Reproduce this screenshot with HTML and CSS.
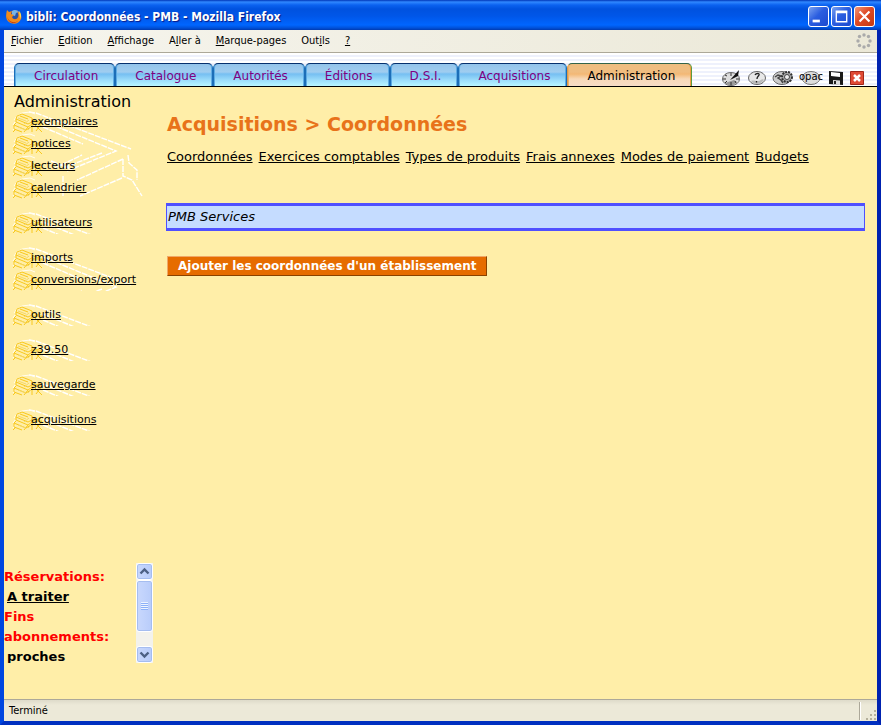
FILE: index.html
```html
<!DOCTYPE html>
<html lang="fr">
<head>
<meta charset="utf-8">
<title>bibli: Coordonnées - PMB</title>
<link rel="stylesheet" href="styles.css">
</head>
<body>
<svg class="defs" aria-hidden="true">
  <symbol id="books" viewBox="0 0 32 22">
    <path d="M4 6l6-4 8-1 5 2M2 9l3-4M1 14l2-3M1 19l2-3" fill="none" stroke="#fffdf2"/>
    <path d="M5 5l5-2 10 4v4l-4 2L4 8zM4 8v3l12 5 4-3v-3M4 12l-2 2 12 5 5-3M2 14v4l8 3M1 21l3-3M20 8l5 3 4-2M21 12h9l-6 8M23 14l7 7M8 5l8 3M16 16l-4 5M20 13v8" fill="none" stroke="#f8c81c"/>
    <path d="M6 7l8 3M12 13l5-4M6 16l8 3M16 19l5-5" fill="none" stroke="#f3d768"/>
  </symbol>
  <symbol id="outline" viewBox="0 0 132 87">
    <path d="M17 1l7 1 95 36M31 10l73 30-49 20M31 16l40 17M90 42L51 57M43 57l27-13M111 48v17l9 4 10 16M116 44l1 8 8 7v10M110 67L68 85M51 65v20M111 48L65 69M39 50l20 8" fill="none" stroke="#fff" stroke-width="1.4" stroke-dasharray="6 1"/>
  </symbol>
</svg>
<header class="titlebar">
  <svg class="fox" viewBox="0 0 16 16" aria-hidden="true">
    <circle cx="8.500" cy="8" r="6" fill="#2853a8"/><path d="M6 3c2-2 6-1 7 1l-3 1-1 3-3-1z" fill="#78b5e8"/>
    <path d="M1 2l2 2 3-1-1 3 3 1-2 2c1 3 5 3 6 0 1-2 0-4-1-6 4 2 5 5 4 8-2 5-8 6-12 3C-1 11 0 6 1 2z" fill="#f38b1b"/>
    <path d="M1 8c1 5 6 8 11 5-4 4-10 2-11-5z" fill="#c63c10"/><path d="M13 3c3 3 2 6 1 8z" fill="#ffdb52"/>
  </svg>
  <span class="caption">bibli: Coordonnées - PMB - Mozilla Firefox</span>
  <button class="win" aria-label="Réduire"><svg viewBox="0 0 21 21"><path d="M4 14h8v3H4z" fill="#fff"/></svg></button>
  <button class="win" aria-label="Agrandir"><svg viewBox="0 0 21 21"><path d="M4 4h13v13H4zM5.500 7v8.500h10V7z" fill="#fff" fill-rule="evenodd"/></svg></button>
  <button class="win close" aria-label="Fermer"><svg viewBox="0 0 21 21"><path d="M5 5l11 11M16 5L5 16" stroke="#fff" stroke-width="2.400"/></svg></button>
</header>
<div class="frame">
  <nav class="menu" aria-label="Menu">
    <a href="#"><u>F</u>ichier</a><a href="#"><u>E</u>dition</a><a href="#"><u>A</u>ffichage</a><a href="#">A<u>l</u>ler à</a><a href="#"><u>M</u>arque-pages</a><a href="#">Out<u>i</u>ls</a><a href="#"><u>?</u></a>
    <svg class="throbber" viewBox="0 0 16 16" aria-hidden="true"><g fill="#aaa"><circle cx="8" cy="2" r="1.700"/><circle cx="12.500" cy="3.500" r="1.700"/><circle cx="14" cy="8" r="1.700"/><circle cx="12.500" cy="12.500" r="1.700"/><circle cx="8" cy="14" r="1.700"/><circle cx="3.500" cy="12.500" r="1.700"/><circle cx="2" cy="8" r="1.700"/><circle cx="3.500" cy="3.500" r="1.700"/></g></svg>
  </nav>
  <div class="tabbar">
    <nav class="tabs" aria-label="Modules">
      <a href="#">Circulation</a><a href="#">Catalogue</a><a href="#">Autorités</a><a href="#">Éditions</a><a href="#">D.S.I.</a><a href="#">Acquisitions</a><a href="#" class="on">Administration</a>
    </nav>
    <div class="tools">
      <button aria-label="Historique"><svg width="20" height="20" viewBox="0 0 20 20"><ellipse cx="9" cy="11" rx="8.500" ry="6.500" fill="#ddd" stroke="#666"/><path d="M3 15c3 3 9 3 12-1l-3-2z" fill="#999"/><path d="M9 5v3M9 14v3M1 11h3M14 11h3M3 7l2 1M3 15l2-2M14 15l-1-2" stroke="#333"/><path d="M8 12l9-10-1 6z" fill="#111"/></svg></button>
      <button aria-label="Aide"><svg width="20" height="20" viewBox="0 0 20 20"><ellipse cx="10" cy="10" rx="8.500" ry="6.500" fill="#e8e8e8" stroke="#666"/><path d="M4 13c3 4 9 4 13-1-2-2-3 1-6 1s-5-1-7 0z" fill="#bbb"/><path d="M8 7c1-2 5-2 4 0-.5 1.500-2 1.500-2 4M9.500 13v1.500" fill="none" stroke="#222" stroke-width="1.300"/></svg></button>
      <button aria-label="Paramètres"><svg width="22" height="20" viewBox="0 0 22 20"><ellipse cx="10" cy="10" rx="9" ry="6.500" fill="#ccc" stroke="#666"/><path d="M3 9l3-2 3 1-3 2 3 2 2 3" fill="none" stroke="#444" stroke-width="1.500"/><circle cx="15" cy="9" r="5" fill="#aaa" stroke="#333" stroke-width="2" stroke-dasharray="2 1"/><circle cx="15" cy="9" r="2.500" fill="#eee" stroke="#444"/></svg></button>
      <button class="opac"><svg width="24" height="20" viewBox="0 0 24 20" aria-hidden="true"><ellipse cx="12" cy="10" rx="9" ry="6.500" fill="#ddd" stroke="#777"/></svg><span>opac</span></button>
      <button aria-label="Sauvegarde"><svg width="16" height="20" viewBox="0 0 16 20"><path d="M1 3l14 1v13L1 16z" fill="#181818"/><path d="M3 4l9 1v4L3 8z" fill="#fff"/><path d="M5 12l7 .5V17l-7-.5z" fill="#ddd"/><path d="M6 13h2v3H6z" fill="#222"/></svg></button>
      <button aria-label="Quitter"><svg width="16" height="20" viewBox="0 0 16 20"><path d="M1.500 3.500h13v13h-13z" fill="#df4a35" stroke="#a3271a"/><path d="M5 7l6 6M11 7l-6 6" stroke="#fff" stroke-width="2.500"/></svg></button>
    </div>
  </div>
  <div class="page">
    <aside class="side">
      <h2>Administration</h2>
      <ul><svg class="outline" aria-hidden="true"><use href="#outline" width="132" height="87"/></svg>
        <li><svg aria-hidden="true"><use href="#books"/></svg><a href="#">exemplaires</a></li>
        <li><svg aria-hidden="true"><use href="#books"/></svg><a href="#">notices</a></li>
        <li><svg aria-hidden="true"><use href="#books"/></svg><a href="#">lecteurs</a></li>
        <li><svg aria-hidden="true"><use href="#books"/></svg><a href="#">calendrier</a></li></ul>
      <ul><svg class="outline" aria-hidden="true"><use href="#outline" width="132" height="87"/></svg>
        <li><svg aria-hidden="true"><use href="#books"/></svg><a href="#">utilisateurs</a></li></ul>
      <ul><svg class="outline" aria-hidden="true"><use href="#outline" width="132" height="87"/></svg>
        <li><svg aria-hidden="true"><use href="#books"/></svg><a href="#">imports</a></li>
        <li><svg aria-hidden="true"><use href="#books"/></svg><a href="#">conversions/export</a></li></ul>
      <ul><svg class="outline" aria-hidden="true"><use href="#outline" width="132" height="87"/></svg>
        <li><svg aria-hidden="true"><use href="#books"/></svg><a href="#">outils</a></li></ul>
      <ul><svg class="outline" aria-hidden="true"><use href="#outline" width="132" height="87"/></svg>
        <li><svg aria-hidden="true"><use href="#books"/></svg><a href="#">z39.50</a></li></ul>
      <ul><svg class="outline" aria-hidden="true"><use href="#outline" width="132" height="87"/></svg>
        <li><svg aria-hidden="true"><use href="#books"/></svg><a href="#">sauvegarde</a></li></ul>
      <ul><svg class="outline" aria-hidden="true"><use href="#outline" width="132" height="87"/></svg>
        <li><svg aria-hidden="true"><use href="#books"/></svg><a href="#">acquisitions</a></li></ul>
      <div class="alerts">
        <div class="alert-text">
          <p>Réservations:</p>
          <p class="entry"><a href="#">A traiter</a></p>
          <p>Fins abonnements:</p>
          <p class="entry">proches</p>
        </div>
        <div class="scroll">
          <button aria-label="Haut"><svg viewBox="0 0 15 15"><path d="M3.500 9.500l4-4 4 4" fill="none" stroke="#4d6185" stroke-width="2.400"/></svg></button>
          <div class="thumb"><i></i></div>
          <button aria-label="Bas"><svg viewBox="0 0 15 15"><path d="M3.500 5.500l4 4 4-4" fill="none" stroke="#4d6185" stroke-width="2.400"/></svg></button>
        </div>
      </div>
    </aside>
    <main>
      <h1>Acquisitions &gt; Coordonnées</h1>
      <nav class="links" aria-label="Acquisitions">
        <a href="#">Coordonnées</a> <a href="#">Exercices comptables</a> <a href="#">Types de produits</a> <a href="#">Frais annexes</a> <a href="#">Modes de paiement</a> <a href="#">Budgets</a>
      </nav>
      <table><tbody><tr><td>PMB Services</td></tr></tbody></table>
      <button class="add">Ajouter les coordonnées d'un établissement</button>
    </main>
  </div>
  <footer><span>Terminé</span><svg class="grip" viewBox="0 0 18 20" aria-hidden="true"><path d="M.5 1v18" stroke="#aca899"/><path d="M1.500 1v18" stroke="#fff"/><path d="M15 9h2v2h-2zM11 13h2v2h-2zM15 13h2v2h-2zM7 17h2v2H7zM11 17h2v2h-2zM15 17h2v2h-2z" fill="#b5b09c"/></svg></footer>
</div>
</body>
</html>
```

FILE: styles.css
```css
* { box-sizing: border-box; }
body {
  margin: 0;
  min-height: 100vh;
  display: flex;
  flex-direction: column;
  background: #0046e0;
  font: 13px/20px "DejaVu Sans", sans-serif;
  color: #000;
}
a { color: inherit; }
button { margin: 0; padding: 0; font: inherit; }
.defs { position: absolute; width: 0; height: 0; }

.titlebar {
  height: 30px;
  display: flex;
  align-items: center;
  gap: 2px;
  padding: 2px 6px 0 6px;
  background: linear-gradient(#0036b8 0, #3088ff 2px, #0b62f0 5px, #0052df 9px, #0056e8 16px, #0066ff 25px, #0050d8 28px, #003ab0 30px);
}
.fox { width: 16px; height: 16px; margin-right: 2px; }
.caption {
  flex: 1;
  padding-top: 2px;
  color: #fff;
  font: bold 12px/20px "DejaVu Sans Condensed", sans-serif;
  text-shadow: 1px 1px 1px #0a1883;
  white-space: nowrap;
}
.win {
  width: 21px;
  height: 21px;
  border: 1px solid #fff;
  border-radius: 3px;
  background: linear-gradient(135deg, #7ba2f0, #2a5de0 45%, #1c49cf);
}
.win svg { display: block; width: 19px; height: 19px; }
.win.close { background: linear-gradient(135deg, #f0977a, #df4a25 45%, #c33910); }

.frame {
  flex: 1;
  display: flex;
  flex-direction: column;
  border: solid #0046e0;
  border-width: 0 4px 4px;
  border-color: #0046e0 #0022b0 #0030c0 #0046e0;
}
.menu {
  height: 23px;
  display: flex;
  align-items: center;
  gap: 15px;
  padding: 0 5px 0 7px;
  background: linear-gradient(90deg, #f6f5ee, #ebe8d7);
  border-bottom: 1px solid #aca899;
  font: 11px/16px "DejaVu Sans Condensed", sans-serif;
}
.menu a { text-decoration: none; white-space: nowrap; }
.throbber { width: 16px; height: 16px; margin-left: auto; }

.tabbar {
  height: 34px;
  display: flex;
  align-items: flex-end;
  justify-content: space-between;
  padding: 0 12px 0 10px;
  background: repeating-linear-gradient(#fff 0 2px, #eef1fc 2px 4px);
  border-bottom: 1px solid #000;
}
.tabs { display: flex; }
.tabs a {
  height: 23px;
  padding: 2px 16px 0 19px;
  border: solid #1c6eb8;
  border-width: 1px 1px 0;
  border-top-color: #06306e;
  border-radius: 5px 5px 0 0;
  background: linear-gradient(#94c4ea 0, #a0cdf0 8px, #76bff2 10px, #9cdcfa 16px, #b9f6ff 22px);
  box-shadow: inset 1px 0 #5eabe3, inset -1px 0 #5eabe3;
  color: #800080;
  font-size: 12px;
  line-height: 20px;
  text-decoration: none;
  white-space: nowrap;
}
.tabs .on {
  border-color: #32634a #5d9a3e #e09a46 #e09a46;
  background: linear-gradient(#eebd80 0, #f0bd80 8px, #f3b875 10px, #f7d9b9 15px, #f6dcc6 22px);
  box-shadow: inset 1px 0 #efb068, inset -1px 0 #ee9c42;
  color: #000;
}
.tools { display: flex; gap: 5px; }
.tools button { position: relative; height: 18px; border: 0; background: none; }
.tools svg { display: block; }
.opac span {
  position: absolute;
  inset: 0;
  font-size: 10px;
  line-height: 18px;
  text-align: center;
}

.page { flex: 1; display: flex; background: #ffeea8; }
.side { width: 149px; flex: none; display: flex; flex-direction: column; }
.side h2 { margin: 6px 0 0 10px; font: 16px/18px "DejaVu Sans", sans-serif; }
.side ul {
  position: relative;
  align-self: flex-start;
  min-width: 80px;
  margin: 0 0 13px 8px;
  padding: 0;
  list-style: none;
}
.outline { position: absolute; left: 0; top: 0; width: 100%; height: 100%; overflow: hidden; }
.side ul:first-of-type { width: 132px; }
.side li { position: relative; height: 22px; padding-left: 19px; font-size: 11px; line-height: 22px; }
.side li svg { position: absolute; left: 0; top: 0; width: 32px; height: 22px; }
.side li a { position: relative; white-space: nowrap; }

.alerts { display: flex; margin: auto 0 36px; height: 100px; }
.alert-text { flex: 1; padding-top: 4px; color: #f00; font-weight: bold; overflow: hidden; }
.alert-text p { margin: 0; }
.alert-text .entry { padding-left: 3px; color: #000; }
.scroll { width: 17px; display: flex; flex-direction: column; background: #f3f2ec; }
.scroll button, .thumb {
  height: 17px;
  border: 1px solid #fff;
  border-radius: 3px;
  background: linear-gradient(90deg, #c9d8fd, #b8ccfa);
  box-shadow: inset 0 0 0 1px #a5bdf0;
}
.scroll button svg { display: block; width: 15px; height: 15px; }
.scroll button:last-child { margin-top: auto; }
.thumb { height: 52px; display: grid; place-items: center; }
.thumb i { width: 7px; height: 8px; background: repeating-linear-gradient(#eef4fe 0 1px, #8cb0f8 1px 2px); }

main { flex: 1; padding: 24px 12px 0 13px; }
h1 { margin: 0 0 10px 1px; font-size: 19px; line-height: 26px; color: #e8731a; }
.links { display: flex; flex-wrap: wrap; column-gap: 6px; margin: 0 0 36px 1px; }
table { width: 100%; border-collapse: separate; border-spacing: 0; border: solid #5050ff; border-width: 3px 1px; background: #c5dcff; }
td { padding: 1px; font-style: italic; }
.add {
  height: 20px;
  margin: 25px 0 0 1px;
  padding: 0 10px;
  border: 1px solid;
  border-color: #f0a868 #8a4200 #8a4200 #f0a868;
  background: #e66c00;
  color: #fff;
  font-size: 12px;
  font-weight: bold;
  line-height: 18px;
  display: block;
}
footer {
  height: 22px;
  display: flex;
  align-items: center;
  justify-content: space-between;
  padding-left: 5px;
  background: linear-gradient(#dedbca, #ece9d8 5px);
  border-top: 1px solid #aca899;
  font: 11px/16px "DejaVu Sans Condensed", sans-serif;
}
.grip { width: 18px; height: 20px; }
```
